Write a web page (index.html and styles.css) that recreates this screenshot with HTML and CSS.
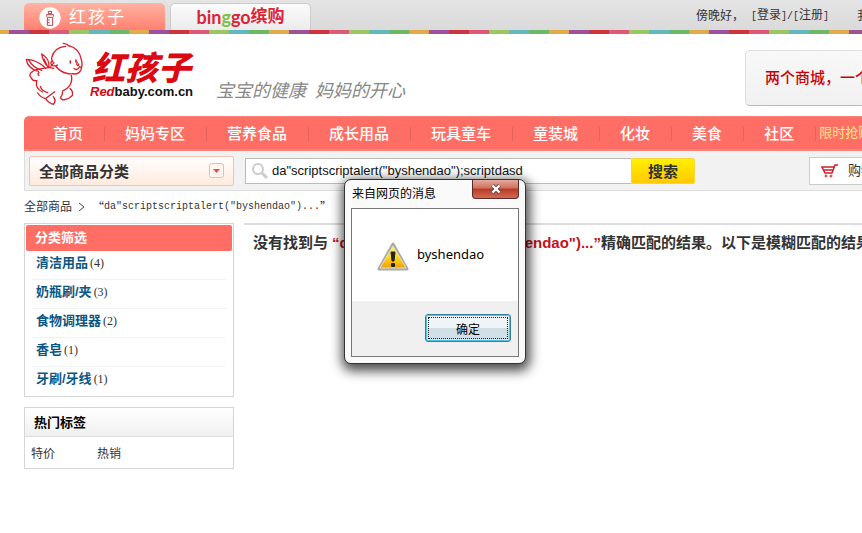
FILE: index.html
```html
<!DOCTYPE html>
<html lang="zh-CN">
<head>
<meta charset="utf-8">
<title>红孩子</title>
<link rel="stylesheet" href="styles.css">
</head>
<body>
<div class="topbar">
  <nav class="malls">
    <a class="mall mall-red" href="#">
      <svg width="22" height="22" viewBox="0 0 66 66" aria-hidden="true"><circle cx="33" cy="33" r="32" fill="#fff"/><path d="M28 13h10v7H28zM23 29v-6h20v6M25 31v24h16V31zM25 39h7M25 47h7" fill="none" stroke="#b8404a" stroke-width="3"/></svg>
      <span>红孩子</span>
    </a>
    <a class="mall mall-bing" href="#"><span class="bing">bin<span class="green">g</span>go</span><span class="bing-cn">缤购</span></a>
  </nav>
  <div class="account"><span>傍晚好，</span><span class="login"><a href="#"><span class="mono">[</span>登录<span class="mono">]</span></a><span class="mono">/</span><a href="#"><span class="mono">[</span>注册<span class="mono">]</span></a></span><a class="mine" href="#">我的红孩子</a></div>
</div>
<div class="stripes"></div>

<header class="header">
  <a class="logo" href="#">
    <svg class="baby" width="66" height="72" viewBox="12 0 198 216" fill="none" stroke="#d8202a" stroke-width="4" stroke-linecap="round" stroke-linejoin="round" aria-hidden="true">
      <path d="M130 16q12 1 18 9M144 22q34 8 40 43q5 18-2 32q-8 14-25 10M137 25q-34 2-42 34q-1 7 4 13M94 70q-4 9 5 13q10 2 13-2M107 84q12 16 30 21q12 4 23 2M172 73q-4 5 0 9q5 2 4-4M162 91q7 8 15-2M178 86l5 2"/>
      <path d="M151 69v6M168 66v6" stroke-width="5"/>
      <path d="M75 89q-26-25-56-25q3 27 36 36M27 68q13 22 38 29M65 48q4 24 20 40M65 48q25 14 22 40M72 63l9 19M92 85l10-11"/>
      <path d="M72 91q-28 2-39 13q-7 9 1 16q4 10 17 8M57 104q-6 4 0 9M76 91q10-4 25 0M50 129q-5 23 18 33M61 145q3 13 22 19M154 112q4 15-5 31q-7 10-18 14M104 161q-16 12-25 19M53 165q8 13 24 17q10 15 23 17q10-10 0-23M128 159q0 13-7 20q7 10 14 5q14-2 22-12q3-13-7-20"/>
    </svg>
    <span class="wordmark"><span class="brand">红孩子</span><span class="domain"><span class="red">Red</span>baby.com.cn</span></span>
  </a>
  <p class="slogan">宝宝的健康&ensp;妈妈的开心</p>
  <p class="promo">两个商城，一个购物车</p>
</header>

<div class="shop">
  <nav class="mainnav">
    <a href="#">首页</a><a href="#">妈妈专区</a><a href="#">营养食品</a><a href="#">成长用品</a><a href="#">玩具童车</a><a href="#">童装城</a><a href="#">化妆</a><a href="#">美食</a><a href="#">社区</a><a class="flash" href="#">限时抢购</a>
  </nav>
  <form class="searchbar" onsubmit="return false">
    <button class="categories" type="button"><span>全部商品分类</span>
      <svg width="15" height="15" viewBox="0 0 15 15" aria-hidden="true"><rect x=".5" y=".5" width="14" height="14" rx="2" fill="#fff5ee" stroke="#f1b7a8"/><path d="M4 6h7L7.500 10z" fill="#d9534f"/></svg>
    </button>
    <label class="query">
      <svg width="18" height="18" viewBox="0 0 18 18" fill="none" stroke="#ccc" aria-hidden="true"><circle cx="7" cy="7" r="5" stroke-width="2"/><path d="M11 11l5 5" stroke-width="3"/></svg>
      <input type="text" aria-label="搜索" value="da&quot;scriptscriptalert(&quot;byshendao&quot;);scriptdasd">
    </label>
    <button class="go" type="submit">搜索</button>
    <a class="cart" href="#"><svg width="18" height="14" viewBox="0 0 18 14" fill="none" stroke="#c4232b" aria-hidden="true"><path d="M17 1h-3l-3 8H4L1 3h12M3 6h9" stroke-width="1.500"/><circle cx="5" cy="12" r="1"/><circle cx="10" cy="12" r="1"/></svg><span>购物车</span></a>
  </form>
</div>

<div class="crumbs"><a href="#">全部商品</a><svg width="7" height="10" viewBox="0 0 7 10" fill="none" stroke="#444" aria-hidden="true"><path d="M1 1l5 4-5 4"/></svg><span class="quote">“</span><span class="mono">da"scriptscriptalert("byshendao")...</span><span class="quote">”</span></div>

<div class="content">
  <aside class="side">
    <section class="filter">
      <h2>分类筛选</h2>
      <ul>
        <li><a href="#">清洁用品</a><span class="count">(4)</span></li>
        <li><a href="#">奶瓶刷/夹</a><span class="count">(3)</span></li>
        <li><a href="#">食物调理器</a><span class="count">(2)</span></li>
        <li><a href="#">香皂</a><span class="count">(1)</span></li>
        <li><a href="#">牙刷/牙线</a><span class="count">(1)</span></li>
      </ul>
    </section>
    <section class="tags">
      <h2>热门标签</h2>
      <div class="taglist"><a href="#">特价</a><a href="#">热销</a></div>
    </section>
  </aside>
  <main class="results">
    <p>没有找到与<span class="term">“da"scriptscriptalert("byshendao")...”</span>精确匹配的结果。以下是模糊匹配的结果</p>
  </main>
</div>

<div class="dialog" role="dialog" aria-labelledby="dialog-title">
  <div class="titlebar"><span id="dialog-title">来自网页的消息</span>
    <button class="close" type="button" aria-label="关闭"><svg width="12" height="10" viewBox="0 0 12 10" aria-hidden="true"><path d="M2.500 1.500l7 7M9.500 1.500l-7 7" stroke="#5b4a55" stroke-width="4"/><path d="M2.500 1.500l7 7M9.500 1.500l-7 7" stroke="#fff" stroke-width="2.400"/></svg></button>
  </div>
  <div class="pane">
    <div class="message">
      <svg width="32" height="29" viewBox="0 0 32 29" aria-hidden="true"><defs><linearGradient id="w" x2="0" y2="1"><stop stop-color="#fff16a"/><stop offset=".5" stop-color="#ffd91a"/><stop offset="1" stop-color="#f0a000"/></linearGradient></defs><path d="M16 2L30 27H2z" fill="#aaa" stroke="#aaa" stroke-width="3" stroke-linejoin="round"/><path d="M16 4L29 26H3z" fill="url(#w)" stroke="#e8e0b8" stroke-linejoin="round"/><path d="M14 10h4l-1 9h-2z" fill="#222" stroke="#222"/><rect x="14" y="21" width="4" height="4" rx="1" fill="#222"/></svg>
      <span>byshendao</span>
    </div>
    <div class="actions"><button class="ok" type="button">确定</button></div>
  </div>
</div>
</body>
</html>
```
FILE: styles.css
```css
* { box-sizing: border-box; }
body {
  margin: 0;
  min-height: 100vh;
  overflow: hidden;
  background: #fff;
  color: #333;
  font: 12px/16px "Liberation Sans", "Noto Sans CJK SC", sans-serif;
  white-space: nowrap;
}
a { color: inherit; text-decoration: none; }
p, h2, ul { margin: 0; padding: 0; }
ul { list-style: none; }
button, input { font-family: inherit; color: inherit; margin: 0; }
svg { display: block; flex: none; }

.topbar {
  display: flex;
  justify-content: space-between;
  height: 30px;
  padding-left: 24px;
  background: linear-gradient(#e4e4e4, #dadada);
  overflow: hidden;
}
.malls { display: flex; gap: 5px; padding-top: 3px; }
.mall {
  display: flex;
  align-items: center;
  height: 27px;
  width: 141px;
  border-radius: 5px 5px 0 0;
}
.mall-red {
  padding: 2px 0 0 15px;
  gap: 8px;
  background: linear-gradient(#ffb3a3, #ff8170);
  color: #fff;
  font-size: 17px;
  letter-spacing: 2px;
}
.mall-bing {
  justify-content: center;
  background: linear-gradient(#fbfbfb, #ebebeb);
  border: 1px solid #ccc;
  border-bottom: 0;
  color: #dc2435;
}
.bing { font: 700 18px/22px Lato, sans-serif; }
.bing .green { color: #7cc142; }
.bing-cn { font-size: 17px; font-weight: 700; }
.account { display: flex; align-items: center; flex: none; width: 166px; padding-top: 2px; }
.login { margin-left: 7px; }
.mine { margin-left: 28px; }
.stripes {
  height: 4px;
  background: repeating-linear-gradient(90deg, #9c519c 0 20px, #cd343c 20px 40px, #dc5a78 40px 60px, #9cc662 60px 80px, #62b8bd 80px 100px, #6cb867 100px 120px, #e1aa4c 120px 140px);
  background-position: 9px 0;
  background-size: 140px 4px;
}

.header { display: flex; height: 82px; padding-left: 24px; overflow: hidden; }
.logo { display: flex; flex: none; width: 192px; padding-top: 4px; }
.wordmark { display: flex; flex-direction: column; padding-top: 15px; }
.brand {
  padding-left: 2px;
  color: #dc0812;
  font-size: 33px;
  line-height: 32px;
  font-weight: 900;
  font-style: italic;
}
.domain { font-size: 13px; line-height: 14px; font-weight: 700; color: #111; }
.domain .red { color: #dc0812; font-style: italic; }
.slogan {
  padding-top: 44px;
  font-size: 18px;
  line-height: 26px;
  font-style: italic;
  color: #888;
}
.promo {
  flex: none;
  width: 117px;
  height: 56px;
  margin: 16px 0 0 auto;
  padding-left: 19px;
  border: 1px solid #ddd;
  border-bottom-color: #bbb;
  border-right: 0;
  border-radius: 5px 0 0 5px;
  background: linear-gradient(#f8f8f8, #f1f1f1);
  color: #c00;
  font-size: 15px;
  line-height: 54px;
  font-weight: 500;
  overflow: hidden;
}

.shop { margin-left: 24px; overflow: hidden; }
.mainnav {
  display: flex;
  height: 35px;
  padding-left: 9px;
  border: solid #f98378;
  border-width: 1px 0 2px;
  border-radius: 5px 0 0 0;
  background: #ff6e64;
  color: #fff;
  font-size: 15px;
  line-height: 34px;
  font-weight: 500;
}
.mainnav a { position: relative; flex: none; padding: 0 22px 0 20px; }
.mainnav a:not(.flash)::after {
  content: "";
  position: absolute;
  right: 0;
  top: 10px;
  width: 1px;
  height: 14px;
  background: #e2635a;
}
.mainnav .flash { padding: 0 3px; color: #ffe98a; font-size: 13px; line-height: 32px; font-weight: 400; }
.searchbar {
  display: flex;
  align-items: center;
  height: 40px;
  padding-left: 4px;
  border: solid #ddd;
  border-width: 0 0 1px 1px;
  background: #f2f2f2;
}
.categories {
  display: flex;
  flex: none;
  justify-content: space-between;
  align-items: center;
  width: 205px;
  height: 30px;
  padding: 0 9px;
  border: 1px solid #f2c1b1;
  border-radius: 2px;
  background: linear-gradient(#fff, #ffeade);
  font-size: 15px;
  font-weight: 700;
}
.query {
  display: flex;
  flex: none;
  align-items: center;
  gap: 3px;
  width: 386px;
  height: 26px;
  margin-left: 11px;
  padding-left: 5px;
  border: 1px solid #bbb;
  border-right: 0;
  background: #fff;
}
.query input { flex: 1; min-width: 0; height: 24px; padding: 0; border: 0; outline: 0; background: none; font-size: 13px; color: #111; }
.go {
  flex: none;
  width: 64px;
  height: 26px;
  padding: 0;
  border: 1px solid #f7d838;
  border-radius: 0 2px 2px 0;
  background: linear-gradient(#fff000, #ffc900);
  font-size: 15px;
  font-weight: 700;
}
.cart {
  display: flex;
  flex: none;
  align-items: center;
  gap: 9px;
  width: 90px;
  height: 28px;
  margin-left: 114px;
  padding-left: 11px;
  border: 1px solid #ccc;
  background: #fff;
  font-size: 13px;
}

.crumbs { display: flex; align-items: center; height: 32px; padding-left: 24px; }
.crumbs svg { margin: 0 7px 0 6px; }
.quote { font-family: "Noto Sans CJK SC", sans-serif; }
.mono { font: 10px/16px "Liberation Mono", monospace; }

.content { display: flex; gap: 10px; padding-left: 24px; }
.side { display: flex; flex-direction: column; flex: none; gap: 10px; width: 210px; }
.filter { height: 174px; padding: 1px; border: 1px solid #d5d5d5; }
.filter h2 {
  height: 26px;
  padding-left: 9px;
  border-radius: 2px;
  background: #ff6e64;
  color: #fff;
  font-size: 13px;
  line-height: 26px;
}
.filter ul { padding: 0 6px; }
.filter li {
  display: flex;
  gap: 2px;
  height: 29px;
  padding-left: 4px;
  border-bottom: 1px solid #f0f3f3;
  line-height: 24px;
}
.filter li:last-child { border: 0; }
.filter li a { color: #0b5784; font-size: 13px; font-weight: 700; }
.count { font-family: "Liberation Serif", serif; }
.tags { border: 1px solid #d5d5d5; }
.tags h2 {
  height: 29px;
  padding-left: 9px;
  border-bottom: 1px solid #ddd;
  background: linear-gradient(#fff, #f0f0f0);
  color: #000;
  font-size: 13px;
  line-height: 29px;
}
.taglist { display: flex; gap: 42px; height: 31px; padding: 0 6px; line-height: 34px; }
.results { flex: 1; min-width: 0; overflow: hidden; border-top: 2px solid #ddd; }
.results p { padding: 6px 9px; font-size: 15px; line-height: 24px; font-weight: 700; }
.term { color: #c2121a; margin-left: 4px; }

.dialog {
  position: absolute;
  left: 344px;
  top: 179px;
  width: 182px;
  border: 1px solid #333;
  border-radius: 7px;
  padding: 0 6px 6px;
  background: #fafafa;
  color: #000;
  box-shadow: 1px 4px 12px 3px rgba(0, 0, 0, .7);
}
.titlebar { display: flex; justify-content: space-between; height: 28px; line-height: 28px; padding-left: 1px; }
.close {
  display: flex;
  align-items: center;
  justify-content: center;
  width: 47px;
  height: 19px;
  padding: 0;
  border: 1px solid #5b2a2a;
  border-top: 0;
  border-radius: 0 0 4px 4px;
  background: linear-gradient(#e5a99b, #d1705d 45%, #b93a25 50%, #d46a55);
}
.pane { border: 1px solid #777; background: #f0f0f0; }
.message { display: flex; gap: 8px; height: 92px; padding: 33px 0 0 25px; background: #fff; }
.message span { font: 13px/24px "Noto Sans", sans-serif; }
.actions { display: flex; justify-content: flex-end; padding: 13px 7px 14px; }
.ok {
  width: 86px;
  height: 28px;
  padding: 0;
  border: 1px solid #2f7f9f;
  border-radius: 3px;
  background: linear-gradient(#eef4f7 50%, #cfdde4 50%, #d3e2e8);
  box-shadow: inset 0 0 0 1px #5bc4e2;
  outline: 1px dotted #222;
  outline-offset: -4px;
  font-size: 12px;
}
```
